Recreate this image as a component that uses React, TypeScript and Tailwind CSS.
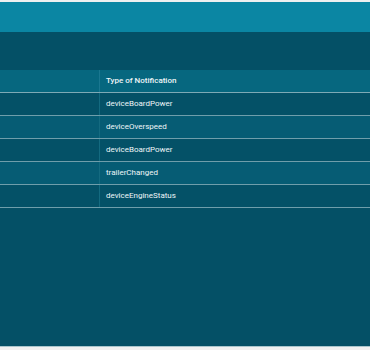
import React from "react";

const rows = [
  "deviceBoardPower",
  "deviceOverspeed",
  "deviceBoardPower",
  "trailerChanged",
  "deviceEngineStatus",
];

export default function App() {
  return (
    <div className="w-[370px] h-[350px] flex flex-col overflow-hidden bg-[#f0f1f1] font-['Roboto',sans-serif]">
      <div className="h-[2px] bg-[#eef0f0]" />
      <div className="h-[30px] bg-[#0b86a3]" />
      <div className="h-[38px] bg-[#045066]" />

      <div className="flex flex-col">
        <div className="flex h-[23px] bg-[#06677f] border-b border-[#7eaab6]">
          <div className="w-[100px] border-r border-[#1a7790]" />
          <div className="flex-1 flex items-center pl-[6px] text-[8px] font-medium text-[#eef6f8]">
            Type of Notification
          </div>
        </div>
        {rows.map((r, i) => (
          <div
            key={i}
            className={`flex h-[23px] border-b border-[#6f9eab] ${
              i % 2 === 0 ? "bg-[#045167]" : "bg-[#065c74]"
            }`}
          >
            <div className="w-[100px] border-r border-[#146a80]" />
            <div className="flex-1 flex items-center pl-[6px] text-[8px] text-[#eef6f8]">
              {r}
            </div>
          </div>
        ))}
      </div>

      <div className="flex-1 bg-[#045066] border-b border-[#a9c6cd]" />
      <div className="h-[3px] bg-[#f0f1f1]" />
    </div>
  );
}
